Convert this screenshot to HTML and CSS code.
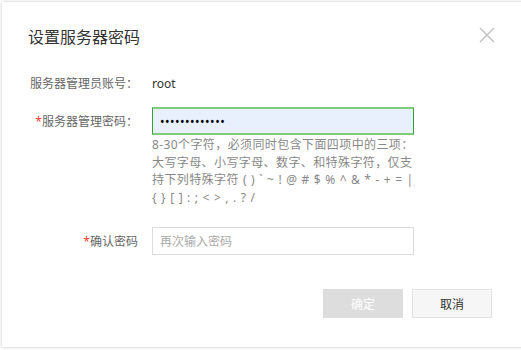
FILE: index.html
```html
<!DOCTYPE html>
<html lang="zh-CN">
  <head>
    <meta charset="UTF-8" />
    <meta name="viewport" content="width=device-width, initial-scale=1.0" />
    <title>设置服务器密码</title>
    <link rel="stylesheet" href="styles.css">
  </head>
  <body>
    <div class="dialog">
      <div class="dialog-header">
        <h2>设置服务器密码</h2>
        <button class="close" aria-label="关闭">
          <svg width="16" height="16" viewBox="0 0 16 16">
            <path d="M1 1 L15 15 M15 1 L1 15" stroke="#c4c4c4" stroke-width="1.5" fill="none" />
          </svg>
        </button>
      </div>
      <div class="form">
        <div class="row">
          <label>服务器管理员账号：</label>
          <span class="value">root</span>
        </div>
        <div class="row row-pwd">
          <label><i>*</i>服务器管理密码：</label>
          <input type="password" class="input active" value="abcdefghijklm" />
        </div>
        <p class="help">
          8-30个字符，必须同时包含下面四项中的三项：<br>
          大写字母、小写字母、数字、和特殊字符，仅支<br>
          持下列特殊字符 ( ) ` ~ ! @ # $ % ^ &amp; * - + = |<br>
          { } [ ] : ; &lt; &gt; , . ? /
        </p>
        <div class="row row-confirm">
          <label><i>*</i>确认密码</label>
          <input type="password" class="input" placeholder="再次输入密码" />
        </div>
      </div>
      <div class="dialog-footer">
        <button class="btn btn-ok" disabled>确定</button>
        <button class="btn btn-cancel">取消</button>
      </div>
    </div>
  </body>
</html>
```

FILE: styles.css
```css
html,
body {
  margin: 0;
  height: 100%;
  overflow: hidden;
}
body {
  font-family: "Noto Sans", "Noto Sans CJK SC", sans-serif;
  background-color: #ffffff;
}
.dialog {
  width: 540px;
  height: 345px;
  margin: 2px 0 0 2px;
  background: #ffffff;
  box-shadow: 0 0 3px rgba(0, 0, 0, 0.25);
  position: relative;
}
.dialog-header {
  box-sizing: border-box;
  display: flex;
  justify-content: space-between;
  align-items: flex-start;
  padding: 23px 0 0 26px;
  width: 493px;
}
.dialog-header h2 {
  margin: 0;
  font-size: 16px;
  font-weight: normal;
  line-height: 24px;
  color: #333;
}
.close {
  border: none;
  background: none;
  padding: 0;
  margin-top: 2px;
  width: 16px;
  height: 16px;
  cursor: pointer;
}
.close svg {
  display: block;
}
.form {
  padding: 20px 0 0 26px;
}
.row {
  display: flex;
  align-items: center;
  height: 28px;
  font-size: 12px;
}
.row label {
  width: 110px;
  text-align: right;
  margin-right: 14px;
  color: #666;
  white-space: nowrap;
}
.row label i {
  font-style: normal;
  color: #f04134;
}
.value {
  color: #333;
}
.row-pwd {
  margin-top: 10px;
}
.input {
  box-sizing: border-box;
  width: 262px;
  height: 28px;
  padding: 0 7px;
  border: 1px solid #dcdcdc;
  font-family: "Noto Sans", "Noto Sans CJK SC", sans-serif;
  font-size: 12px;
  color: #000;
  outline: none;
}
.input::placeholder {
  color: #aaa;
}
.input.active {
  background: #e8f0fe;
  border-color: #2ea52e;
  border-top: 2px solid #7fcc7f;
  border-bottom: 2px solid #7fcc7f;
  letter-spacing: 0.5px;
}
.help {
  margin: 1px 0 0 124px;
  font-size: 12px;
  line-height: 17.5px;
  letter-spacing: 0.4px;
  word-spacing: 0.6px;
  color: #888;
}
.row-confirm {
  margin-top: 21px;
}
.dialog-footer {
  display: flex;
  gap: 9px;
  padding-left: 321px;
  margin-top: 34px;
}
.btn {
  width: 80px;
  height: 29px;
  font-family: "Noto Sans", "Noto Sans CJK SC", sans-serif;
  font-size: 12px;
  cursor: pointer;
}
.btn-ok {
  border: none;
  background: #dddddd;
  color: #fff;
}
.btn-cancel {
  border: 1px solid #e2e2e2;
  background: #f6f6f6;
  color: #333;
}
```
